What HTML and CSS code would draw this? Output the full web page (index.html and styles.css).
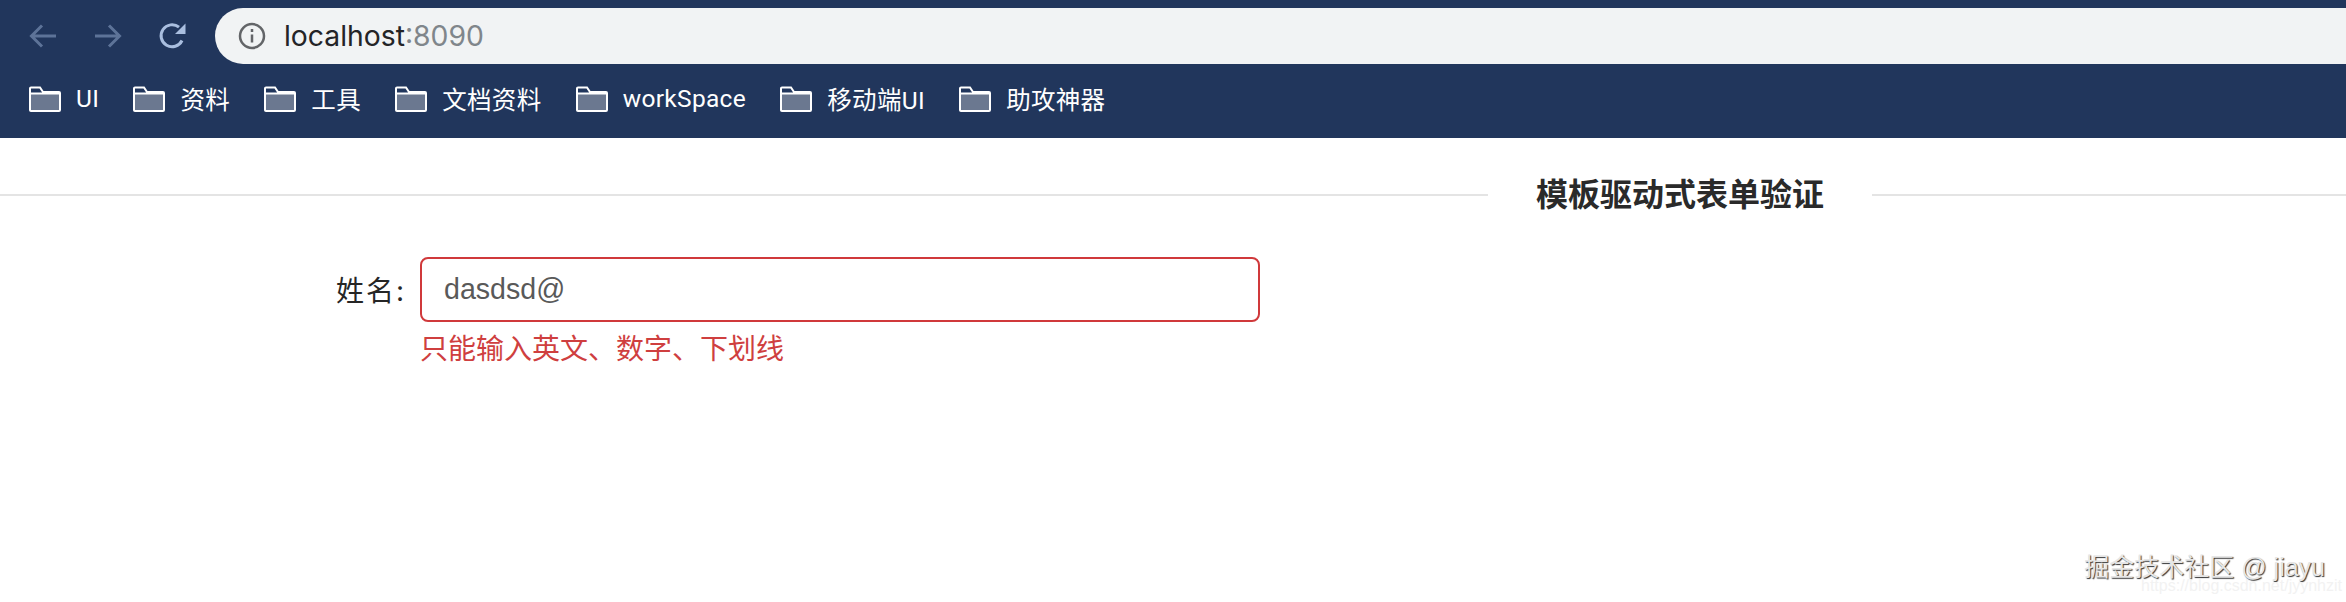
FILE: index.html
```html
<!DOCTYPE html>
<html lang="zh-CN">
<head>
    <meta charset="UTF-8">
    <title>模板驱动式表单验证</title>
    <link rel="stylesheet" href="styles.css">
</head>
<body>
    <div class="browser-bar">
        <div class="toolbar">
            <div class="nav-buttons">
                <svg class="nav-icon dim" viewBox="0 0 30 30"><path d="M28 15H4M14 4.500L3.500 15 14 25.500"/></svg>
                <svg class="nav-icon dim" viewBox="0 0 30 30"><path d="M3 15h24M17 4.500L27.500 15 17 25.500"/></svg>
                <svg class="nav-icon reload" viewBox="0 0 30 30">
                    <path d="M26 19.500A11 11 0 1 1 23 6.200"/>
                    <path class="solid" d="M29.500 2.500V13H19z"/>
                </svg>
            </div>
            <div class="omnibox">
                <svg class="info-icon" viewBox="0 0 28 28">
                    <circle cx="14" cy="14" r="12"/>
                    <path d="M14 12.500v8M14 7v3"/>
                </svg>
                <span class="host">localhost</span><span class="port">:8090</span>
            </div>
        </div>
        <div class="bookmarks">
            <a class="bookmark">
                <svg class="folder" viewBox="0 0 33 26"><use href="#folder-shape"/></svg>
                <span>UI</span>
            </a>
            <a class="bookmark">
                <svg class="folder" viewBox="0 0 33 26"><use href="#folder-shape"/></svg>
                <span>资料</span>
            </a>
            <a class="bookmark">
                <svg class="folder" viewBox="0 0 33 26"><use href="#folder-shape"/></svg>
                <span>工具</span>
            </a>
            <a class="bookmark">
                <svg class="folder" viewBox="0 0 33 26"><use href="#folder-shape"/></svg>
                <span>文档资料</span>
            </a>
            <a class="bookmark">
                <svg class="folder" viewBox="0 0 33 26"><use href="#folder-shape"/></svg>
                <span>workSpace</span>
            </a>
            <a class="bookmark">
                <svg class="folder" viewBox="0 0 33 26"><use href="#folder-shape"/></svg>
                <span>移动端UI</span>
            </a>
            <a class="bookmark">
                <svg class="folder" viewBox="0 0 33 26"><use href="#folder-shape"/></svg>
                <span>助攻神器</span>
            </a>
        </div>
    </div>

    <svg class="sprite" width="0" height="0">
        <symbol id="folder-shape" viewBox="0 0 33 26">
            <path fill="#6b7890" d="M2 8h29v16H2z"/>
            <path fill="none" stroke="#fff" stroke-width="2" d="M2 24.500V2.500a1 1 0 0 1 1-1h9l3 4.500h16a1 1 0 0 1 1 1v17a1 1 0 0 1-1 1H3a1 1 0 0 1-1-1zM2 7.500h30"/>
        </symbol>
    </svg>

    <main class="page">
        <div class="divider">
            <span class="divider-line"></span>
            <h2 class="divider-title">模板驱动式表单验证</h2>
            <span class="divider-line short"></span>
        </div>

        <form class="form-row">
            <label class="form-label" for="name">姓名:</label>
            <div class="form-control">
                <input class="form-input" type="text" id="name" value="dasdsd@">
                <p class="form-error">只能输入英文、数字、下划线</p>
            </div>
        </form>
    </main>

    <div class="watermark">
        <div class="watermark-main">掘金技术社区 @ jiayu</div>
        <div class="watermark-url">https://blog.csdn.net/jyynhzit</div>
    </div>
</body>
</html>
```

FILE: styles.css
```css
* {
    box-sizing: border-box;
    margin: 0;
    padding: 0;
}

body {
    position: relative;
    height: 602px;
    overflow: hidden;
    background: #fff;
    font-family: "Inter", "Noto Sans CJK SC", sans-serif;
}

.sprite {
    position: absolute;
}

.browser-bar {
    height: 138px;
    background: #21365c;
}

.toolbar {
    height: 73px;
    padding: 8px 0 0 28px;
    display: flex;
}

.nav-buttons {
    width: 187px;
    height: 56px;
    display: flex;
    align-items: center;
    gap: 34px;
}

.nav-icon {
    width: 30px;
    height: 30px;
    fill: none;
    stroke-width: 3;
}

.nav-icon.dim {
    stroke: #5d7398;
}

.nav-icon.reload {
    stroke: #a9bedf;
}

.nav-icon .solid {
    fill: #a9bedf;
    stroke: none;
}

.omnibox {
    flex: 1;
    height: 56px;
    padding-left: 23px;
    display: flex;
    align-items: center;
    background: #f1f3f4;
    border-radius: 28px 0 0 28px;
    font-size: 28.300px;
}

.info-icon {
    width: 28px;
    height: 28px;
    margin-right: 18px;
    fill: none;
    stroke: #636568;
    stroke-width: 2.500;
}

.host {
    color: #232427;
}

.port {
    color: #80868b;
}

.bookmarks {
    height: 65px;
    padding: 0 0 14px 28px;
    display: flex;
    align-items: center;
    gap: 33.300px;
}

.bookmark {
    display: flex;
    align-items: center;
    gap: 15px;
    color: #fff;
    font-family: "Roboto", "Noto Sans CJK SC", sans-serif;
    font-size: 24.500px;
    letter-spacing: 0.300px;
}

.folder {
    width: 33px;
    height: 26px;
}

.divider {
    height: 50px;
    margin-top: 32px;
    display: flex;
    align-items: center;
}

.divider-line {
    flex: 1;
    height: 2px;
    background: #e4e4e4;
}

.divider-line.short {
    flex: none;
    width: 474px;
}

.divider-title {
    padding: 0 48px;
    color: #2a2a2a;
    font-size: 32px;
    font-weight: 600;
    line-height: 50px;
}

.form-row {
    margin-top: 37px;
    padding-left: 336px;
    display: flex;
    align-items: flex-start;
}

.form-label {
    width: 84px;
    height: 64px;
    display: flex;
    align-items: center;
    color: #262626;
    font-size: 28px;
    letter-spacing: 2px;
}

.form-control {
    width: 840px;
}

.form-input {
    display: block;
    width: 100%;
    height: 65px;
    padding: 0 22px;
    border: 2px solid #d0393b;
    border-radius: 8px;
    outline: none;
    color: #595959;
    font-family: "Liberation Sans", sans-serif;
    font-size: 28.600px;
}

.form-error {
    margin-top: 7px;
    color: #cf3f3f;
    font-size: 28px;
    line-height: 40px;
}

.watermark {
    position: absolute;
    right: 4px;
    bottom: 8px;
    text-align: right;
}

.watermark-main {
    padding-right: 17px;
    color: #e6e6e6;
    font-family: "Liberation Sans", "Noto Sans CJK SC", sans-serif;
    font-size: 25px;
    line-height: 28px;
    text-shadow: 1px 1px 1px #333;
}

.watermark-url {
    margin-top: -3px;
    color: #f2f2f2;
    font-family: "Liberation Sans", sans-serif;
    font-size: 16px;
    line-height: 16px;
}
```
